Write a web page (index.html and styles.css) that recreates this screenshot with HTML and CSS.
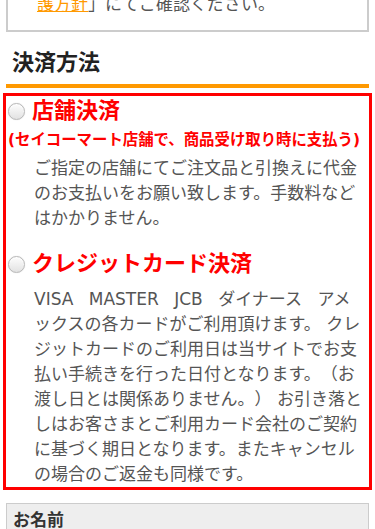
FILE: index.html
```html
<!DOCTYPE html>
<html lang="ja">
<head>
  <meta charset="UTF-8">
  <meta name="viewport" content="width=device-width, initial-scale=1.0">
  <title>ご注文手続き</title>
  <link rel="stylesheet" href="styles.css">
</head>
<body>
  <div class="page">
    <div class="notice">
      <p>個人情報の取扱いについては「<a href="#">個人情報保護方針</a>」にてご確認ください。</p>
    </div>

    <h2 class="section-title">決済方法</h2>

    <div class="payment">
      <div class="option">
        <label class="option-head">
          <input type="radio" name="payment" value="store">
          <span>店舗決済</span>
        </label>
        <p class="option-note">(セイコーマート店舗で、商品受け取り時に支払う)</p>
        <p class="option-desc">ご指定の店舗にてご注文品と引換えに代金のお支払いをお願い致します。手数料などはかかりません。</p>
      </div>

      <div class="option">
        <label class="option-head">
          <input type="radio" name="payment" value="credit">
          <span>クレジットカード決済</span>
        </label>
        <p class="option-desc credit"><span class="brands">VISA MASTER JCB ダイナース アメ</span>ックスの各カードがご利用頂けます。 クレジットカードのご利用日は当サイトでお支払い手続きを行った日付となります。（お渡し日とは関係ありません。） お引き落としはお客さまとご利用カード会社のご契約に基づく期日となります。またキャンセルの場合のご返金も同様です。</p>
      </div>
    </div>

    <div class="field-label">お名前</div>
  </div>
</body>
</html>
```

FILE: styles.css
```css
* {
  margin: 0;
  padding: 0;
  box-sizing: border-box;
}

body {
  font-family: 'DejaVu Sans', 'Noto Sans CJK JP', sans-serif;
  font-size: 17px;
  color: #555;
  background-color: #fff;
  text-spacing-trim: space-all;
}

/* page is scrolled down a little */
.page {
  margin-top: -45px;
  padding: 0 6px;
}

/* privacy notice */
.notice {
  border: 2px solid #ccc;
  padding: 10px 4px 13px 29px;
}

.notice p {
  line-height: 25px;
}

.notice a {
  color: #f90;
  text-decoration: underline;
}

/* section heading */
.section-title {
  margin-top: 16px;
  padding-left: 6px;
  padding-bottom: 6px;
  font-size: 22px;
  line-height: 30px;
  font-weight: bold;
  color: #222;
  border-bottom: 4px solid #f90;
}

/* payment options */
.payment {
  margin: 5px -3px 0;
  border: 3px solid #f00;
}

.option + .option {
  margin-top: 18px;
}

.option-head {
  display: flex;
  align-items: center;
  gap: 7px;
  padding-left: 2px;
  font-size: 22px;
  line-height: 30px;
  font-weight: bold;
  color: #f00;
  cursor: pointer;
}

.option-head input {
  appearance: none;
  -webkit-appearance: none;
  width: 17px;
  height: 17px;
  flex: 0 0 17px;
  border: 1px solid #b8b8b8;
  border-radius: 50%;
  background: linear-gradient(#fdfdfd, #e2e2e2);
  box-shadow: inset 0 1px 1px #fff, 0 0 1px rgba(0, 0, 0, 0.2);
}

.option-note {
  margin-top: 4px;
  padding-left: 2px;
  font-size: 15.4px;
  line-height: 20px;
  font-weight: bold;
  color: #f00;
  white-space: nowrap;
}

.option-desc {
  margin-top: 6px;
  padding: 0 5px 0 28px;
  line-height: 25px;
}

.option-desc.credit {
  margin-top: 8px;
}

.brands {
  word-spacing: 10px;
}

/* form field label */
.field-label {
  margin-top: 13px;
  padding: 4px 6px;
  background-color: #eee;
  border: 1px solid #ccc;
  font-size: 17px;
  line-height: 24px;
  font-weight: bold;
  color: #333;
}
```
